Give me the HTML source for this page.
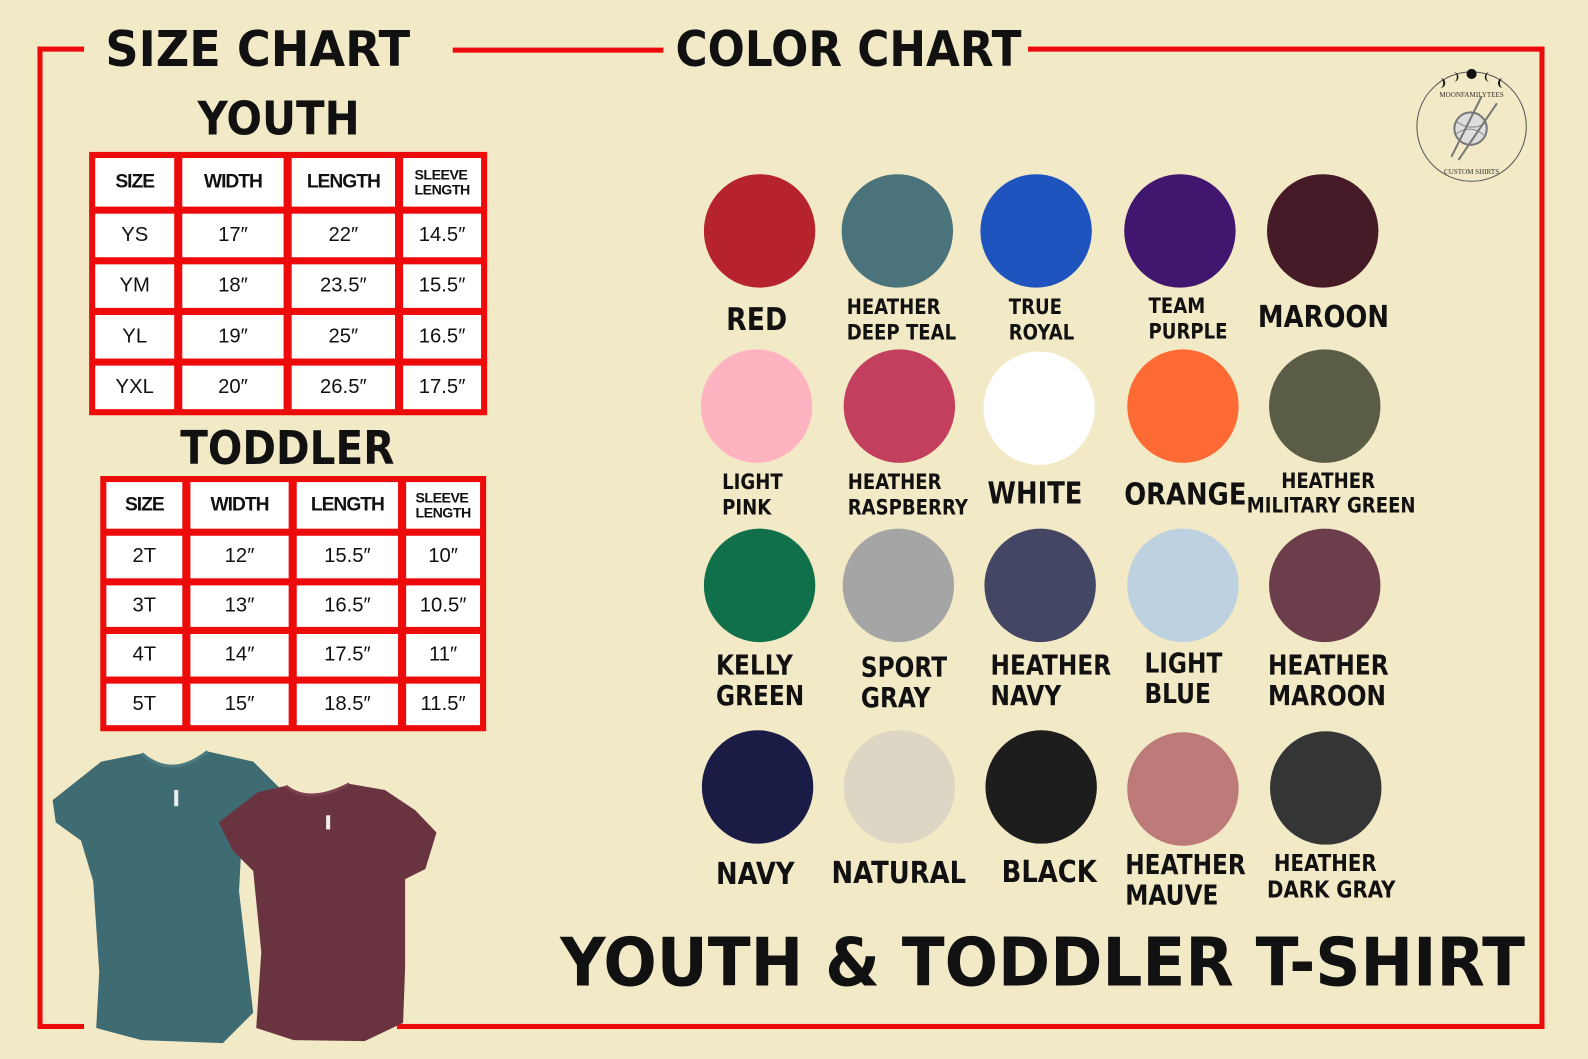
<!DOCTYPE html>
<html><head><meta charset="utf-8"><style>
html,body{margin:0;padding:0;}
body{width:1588px;height:1059px;overflow:hidden;background:#f2e9c6;}
#w{position:absolute;left:0;top:0;width:1568px;height:1046px;transform:scale(1.0128);transform-origin:0 0;font-family:"DejaVu Sans","Liberation Sans",sans-serif;color:#111;}
.r{position:absolute;background:#ec0a0a;}
.t{position:absolute;font-weight:bold;white-space:nowrap;line-height:1;}
.c{position:absolute;width:110px;height:112px;border-radius:50%;}
.tb{position:absolute;background:#ec0a0a;display:grid;padding:6px;gap:7px 8px;box-sizing:border-box;}
.tb div{background:#fff;display:flex;align-items:center;justify-content:center;font-family:"Liberation Sans",sans-serif;font-size:20px;color:#111;}
.tb .h{font-weight:bold;font-size:19px;letter-spacing:-1px;}
.tb .s{font-weight:bold;font-size:14px;line-height:1.1;letter-spacing:-0.5px;text-align:left;}
.l{position:absolute;font-weight:bold;line-height:1.2;white-space:nowrap;transform:scaleX(0.85);transform-origin:0 0;}
</style></head><body><div id="w">
<div class="r" style="left:37px;top:46px;width:5px;height:970px"></div>
<div class="r" style="left:37px;top:46px;width:46px;height:5px"></div>
<div class="r" style="left:447px;top:47px;width:208px;height:5px"></div>
<div class="r" style="left:1015px;top:46px;width:510px;height:5px"></div>
<div class="r" style="left:1520px;top:46px;width:5px;height:970px"></div>
<div class="r" style="left:37px;top:1011px;width:46px;height:5px"></div>
<div class="r" style="left:392px;top:1011px;width:1133px;height:5px"></div>

<div class="t" style="left:104px;top:25px;font-size:48px;transform:scaleX(0.95);transform-origin:0 0">SIZE CHART</div>
<div class="t" style="left:667px;top:25px;font-size:48px;transform:scaleX(0.9);transform-origin:0 0">COLOR CHART</div>
<div class="t" style="left:195px;top:94px;font-size:46px;transform:scaleX(0.9);transform-origin:0 0">YOUTH</div>
<div class="t" style="left:178px;top:419px;font-size:46px;transform:scaleX(0.87);transform-origin:0 0">TODDLER</div>
<div class="t" style="left:553px;top:918px;font-size:66px;transform:scaleX(0.94);transform-origin:0 0">YOUTH &amp; TODDLER T-SHIRT</div>

<div class="tb" style="left:88px;top:150px;width:393px;height:260px;grid-template-columns:78px 100px 102px 77px;grid-template-rows:48px 43px 43px 43px 43px;">
<div class="h">SIZE</div><div class="h">WIDTH</div><div class="h">LENGTH</div><div class="s">SLEEVE<br>LENGTH</div>
<div>YS</div><div>17″</div><div>22″</div><div>14.5″</div>
<div>YM</div><div>18″</div><div>23.5″</div><div>15.5″</div>
<div>YL</div><div>19″</div><div>25″</div><div>16.5″</div>
<div>YXL</div><div>20″</div><div>26.5″</div><div>17.5″</div>
</div>
<div class="tb" style="left:99px;top:470px;width:381px;height:252px;grid-template-columns:75px 97px 100px 73px;grid-template-rows:46px 41.5px 41.5px 41.5px 41.5px;">
<div class="h">SIZE</div><div class="h">WIDTH</div><div class="h">LENGTH</div><div class="s">SLEEVE<br>LENGTH</div>
<div>2T</div><div>12″</div><div>15.5″</div><div>10″</div>
<div>3T</div><div>13″</div><div>16.5″</div><div>10.5″</div>
<div>4T</div><div>14″</div><div>17.5″</div><div>11″</div>
<div>5T</div><div>15″</div><div>18.5″</div><div>11.5″</div>
</div>

<svg style="position:absolute;left:0;top:0" width="460" height="1046" viewBox="0 0 460 1046">
<path d="M100 752 L140 744 Q170 770 205 742 L250 752 L278 780 L262 812 L240 805 L236 880 L250 1000 L220 1030 L140 1027 L95 1015 L98 960 L92 870 L80 830 L55 812 L52 790 Z" fill="#3f6b73"/>
<path d="M140 744 Q170 770 205 742" fill="none" stroke="#4c7a82" stroke-width="3"/>
<path d="M255 782 L282 776 Q305 795 345 774 L380 780 L410 800 L431 822 L420 858 L400 868 L400 955 L398 1010 L360 1028 L290 1027 L253 1015 L258 940 L250 860 L230 840 L216 812 Z" fill="#6a3340"/>
<path d="M282 776 Q305 795 345 774" fill="none" stroke="#7a4050" stroke-width="3"/>
<rect x="172" y="780" width="4" height="16" fill="#eee"/><rect x="322" y="805" width="4" height="14" fill="#eee"/>
</svg>

<svg style="position:absolute;left:1388px;top:60px" width="130" height="125" viewBox="0 0 130 125">
<circle cx="65" cy="65" r="54" fill="none" stroke="#555" stroke-width="1"/>
<circle cx="65" cy="13" r="5" fill="#111"/>
<path d="M47 11 a5 5 0 1 1 0 10 a3.5 5 0 0 0 0 -10z" fill="#111"/>
<path d="M83 11 a5 5 0 1 0 0 10 a3.5 5 0 0 1 0 -10z" fill="#111"/>
<path d="M34 17 a5 5 0 1 1 0 10 a3 5 0 0 0 0 -10z" fill="#111"/>
<path d="M96 17 a5 5 0 1 0 0 10 a3 5 0 0 1 0 -10z" fill="#111"/>
<circle cx="64" cy="67" r="16" fill="#ddd" stroke="#777" stroke-width="2"/>
<path d="M50 60 Q64 70 78 62 M50 72 Q64 62 78 74" stroke="#888" fill="none"/>
<line x1="45" y1="95" x2="75" y2="35" stroke="#777" stroke-width="2"/>
<line x1="52" y1="98" x2="90" y2="42" stroke="#777" stroke-width="2"/>
<text x="65" y="36" font-size="7" text-anchor="middle" fill="#333" font-family="Liberation Serif,serif">MOONFAMILYTEES</text>
<text x="65" y="112" font-size="7" text-anchor="middle" fill="#333" font-family="Liberation Serif,serif">CUSTOM SHIRTS</text>
</svg>

<div class="c" style="left:695px;top:172px;background:#b7232c"></div>
<div class="c" style="left:831px;top:172px;background:#4b737c"></div>
<div class="c" style="left:968px;top:172px;background:#1f54be"></div>
<div class="c" style="left:1110px;top:172px;background:#40166e"></div>
<div class="c" style="left:1251px;top:172px;background:#461b27"></div>

<div class="c" style="left:692px;top:345px;background:#ffb3c1"></div>
<div class="c" style="left:833px;top:345px;background:#c23f5e"></div>
<div class="c" style="left:971px;top:347px;background:#ffffff"></div>
<div class="c" style="left:1113px;top:345px;background:#fd6a33"></div>
<div class="c" style="left:1253px;top:345px;background:#5a5c46"></div>

<div class="c" style="left:695px;top:522px;background:#10704a"></div>
<div class="c" style="left:832px;top:522px;background:#a5a5a5"></div>
<div class="c" style="left:972px;top:522px;background:#434764"></div>
<div class="c" style="left:1113px;top:522px;background:#bed1e0"></div>
<div class="c" style="left:1253px;top:522px;background:#6c3e4c"></div>

<div class="c" style="left:693px;top:721px;background:#1b1c45"></div>
<div class="c" style="left:833px;top:721px;background:#ddd6c4"></div>
<div class="c" style="left:973px;top:721px;background:#1d1d1d"></div>
<div class="c" style="left:1113px;top:723px;background:#bc7a79"></div>
<div class="c" style="left:1254px;top:722px;background:#333634"></div>

<div class="l" style="left:717px;top:298px;font-size:31px">RED</div>
<div class="l" style="left:836px;top:291px;font-size:21px">HEATHER<br>DEEP TEAL</div>
<div class="l" style="left:996px;top:291px;font-size:21px">TRUE<br>ROYAL</div>
<div class="l" style="left:1134px;top:290px;font-size:21px">TEAM<br>PURPLE</div>
<div class="l" style="left:1242px;top:296px;font-size:30px">MAROON</div>

<div class="l" style="left:713px;top:464px;font-size:21px">LIGHT<br>PINK</div>
<div class="l" style="left:837px;top:464px;font-size:21px">HEATHER<br>RASPBERRY</div>
<div class="l" style="left:975px;top:470px;font-size:30px">WHITE</div>
<div class="l" style="left:1110px;top:471px;font-size:30px">ORANGE</div>
<div class="l" style="left:1265px;top:463px;font-size:21px">HEATHER</div>
<div class="l" style="left:1231px;top:487px;font-size:21px">MILITARY GREEN</div>

<div class="l" style="left:707px;top:643px;font-size:27px;line-height:1.12">KELLY<br>GREEN</div>
<div class="l" style="left:850px;top:645px;font-size:27px;line-height:1.12">SPORT<br>GRAY</div>
<div class="l" style="left:978px;top:643px;font-size:27px;line-height:1.12">HEATHER<br>NAVY</div>
<div class="l" style="left:1130px;top:641px;font-size:27px;line-height:1.12">LIGHT<br>BLUE</div>
<div class="l" style="left:1252px;top:643px;font-size:27px;line-height:1.12">HEATHER<br>MAROON</div>

<div class="l" style="left:707px;top:846px;font-size:30px">NAVY</div>
<div class="l" style="left:821px;top:845px;font-size:30px">NATURAL</div>
<div class="l" style="left:989px;top:844px;font-size:30px">BLACK</div>
<div class="l" style="left:1111px;top:840px;font-size:27px;line-height:1.12">HEATHER<br>MAUVE</div>
<div class="l" style="left:1251px;top:840px;font-size:23px;line-height:1.15">&nbsp;HEATHER<br>DARK GRAY</div>
</div></body></html>
